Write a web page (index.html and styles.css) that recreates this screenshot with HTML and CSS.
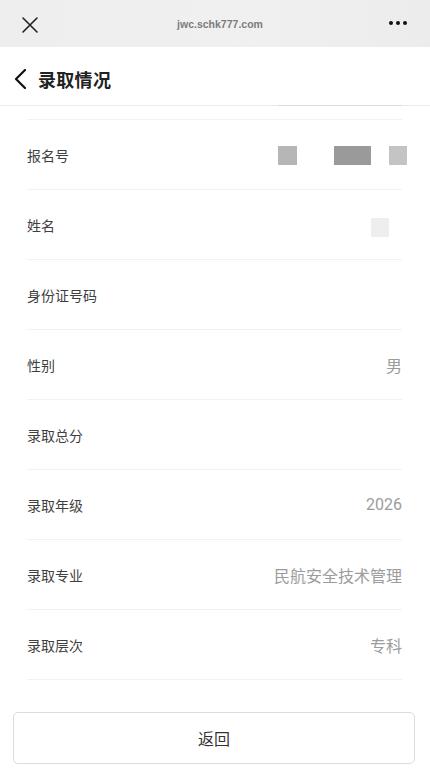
FILE: index.html
```html
<!DOCTYPE html>
<html lang="zh-CN">

<head>
    <meta charset="UTF-8">
    <meta name="viewport" content="width=device-width, initial-scale=1.0">
    <title>录取情况</title>
    <link rel="stylesheet" href="styles.css">
</head>

<body>
    <div class="topbar">
        <svg class="close" width="18" height="18" viewBox="0 0 18 18">
            <path d="M2 2 L16 16 M16 2 L2 16" stroke="#222" stroke-width="1.6" fill="none" stroke-linecap="round"/>
        </svg>
        <span class="url">jwc.schk777.com</span>
        <div class="dots"><i></i><i></i><i></i></div>
    </div>

    <div class="header">
        <svg class="back" width="14" height="20" viewBox="0 0 14 20">
            <path d="M12 1 L3 10 L12 19" stroke="#111" stroke-width="2.2" fill="none" stroke-linecap="round" stroke-linejoin="round"/>
        </svg>
        <h1>录取情况</h1>
    </div>

    <div class="peek"><span></span></div>

    <div class="list">
        <div class="row">
            <span class="label">报名号</span>
            <span class="value masked">
                <i class="m1"></i><i class="m2"></i><i class="m3"></i>
            </span>
        </div>
        <div class="row">
            <span class="label">姓名</span>
            <span class="value masked name">
                <i class="m4"></i>
            </span>
        </div>
        <div class="row">
            <span class="label">身份证号码</span>
            <span class="value"></span>
        </div>
        <div class="row">
            <span class="label">性别</span>
            <span class="value">男</span>
        </div>
        <div class="row">
            <span class="label">录取总分</span>
            <span class="value"></span>
        </div>
        <div class="row">
            <span class="label">录取年级</span>
            <span class="value">2026</span>
        </div>
        <div class="row">
            <span class="label">录取专业</span>
            <span class="value">民航安全技术管理</span>
        </div>
        <div class="row">
            <span class="label">录取层次</span>
            <span class="value">专科</span>
        </div>
    </div>

    <button class="back-btn" onclick="history.back()">返回</button>
</body>

</html>
```

FILE: styles.css
```css
* {
    box-sizing: border-box;
}

body {
    margin: 0;
    background: #fff;
    font-family: Roboto, "Noto Sans CJK SC", sans-serif;
    color: #333;
}

.topbar {
    height: 47px;
    display: flex;
    align-items: center;
    justify-content: space-between;
    padding: 0 23px 0 21px;
    background: linear-gradient(90deg, #eeeeee, #f0f0f0 60%, #ececec);
}

.close {
    margin-top: 2px;
}

.url {
    font-family: "Liberation Sans", Arial, sans-serif;
    font-size: 10.5px;
    font-weight: bold;
    color: #7c7c7c;
    margin-left: 12px;
}

.dots {
    display: flex;
    gap: 3px;
    margin-top: -1px;
}

.dots i {
    width: 4px;
    height: 4px;
    border-radius: 50%;
    background: #111;
}

.header {
    height: 59px;
    display: flex;
    align-items: center;
    gap: 11px;
    padding: 6px 0 0 13px;
    border-bottom: 1px solid #ebebeb;
}

.header h1 {
    margin: 0;
    font-size: 18px;
    font-weight: bold;
    color: #222;
    letter-spacing: 0.3px;
}

.peek {
    height: 14px;
    padding: 0 28px 0 278px;
}

.peek span {
    display: block;
    height: 1px;
    margin-top: -1px;
    background: #dcdcdc;
}

.list {
    margin: 0 28px 0 27px;
    border-bottom: 1px solid #f2f2f2;
}

.row {
    height: 70px;
    display: flex;
    align-items: center;
    justify-content: space-between;
    border-top: 1px solid #f2f2f2;
}

.label {
    font-size: 14px;
    color: #3f3f3f;
}

.value {
    font-size: 16px;
    color: #9c9c9c;
}

.masked {
    display: flex;
    align-items: center;
    margin-right: -5px;
    margin-top: 2px;
}

.masked i {
    display: block;
    height: 19px;
}

.m1 {
    width: 19px;
    background: #b6b6b6;
    margin-right: 37px;
}

.m2 {
    width: 37px;
    background: #9a9a9a;
    margin-right: 18px;
}

.m3 {
    width: 18px;
    background: #c4c4c4;
}

.name {
    margin-right: 13px;
    margin-top: 6px;
}

.m4 {
    width: 18px;
    background: #eeeeee;
}

.back-btn {
    display: block;
    width: 402px;
    height: 52px;
    margin: 32px 0 0 13px;
    border: 1px solid #dcdcdc;
    border-radius: 5px;
    background: #fff;
    font-family: "Noto Sans CJK SC", sans-serif;
    font-size: 16px;
    color: #333;
    cursor: pointer;
}
```
